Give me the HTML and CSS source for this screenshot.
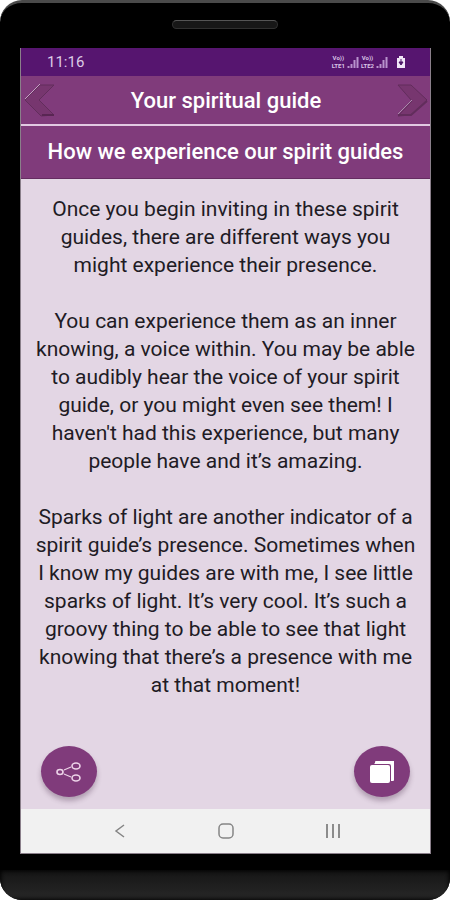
FILE: index.html
```
<!DOCTYPE html>
<html lang="en">
<head>
    <meta charset="UTF-8">
    <meta name="viewport" content="width=device-width, initial-scale=1.0">
    <title>Your spiritual guide</title>
    <link rel="stylesheet" href="styles.css">
</head>
<body>

    <div class="phone">
        <div class="phone-top">
            <div class="speaker"></div>
        </div>

        <div class="screen">
            <div class="status-bar">
                <span>11:16</span>
                <div class="status-icons">
                    <div class="network"><span>Vo))</span><span>LTE1</span></div>
                    <svg class="signal" width="12" height="12" viewBox="0 0 12 12">
                        <path d="M1.5 12V10M4.5 12V8M7.5 12V4M10.5 12V1" stroke="#b893cd" stroke-width="2"/>
                    </svg>
                    <div class="network"><span>Vo))</span><span>LTE2</span></div>
                    <svg class="signal" width="12" height="12" viewBox="0 0 12 12">
                        <path d="M1.5 12V10M4.5 12V8M7.5 12V4M10.5 12V1" stroke="#b893cd" stroke-width="2"/>
                    </svg>
                    <svg class="battery" width="10" height="12" viewBox="0 0 10 12">
                        <path d="M3 0h4v2h2v10H1V2h2z" fill="#f1e6f7"/>
                        <path d="M5 3v4M3 6h4L5 9z" fill="#4b1466" stroke="#4b1466"/>
                    </svg>
                </div>
            </div>

            <header class="title-bar">
                <button class="arrow-button" aria-label="Previous">
                    <svg width="32" height="34" viewBox="0 0 32 34">
                        <path d="M16 2H30L15 17L30 32L17 33L1 17Z" fill="#77366f" stroke="#622d5c"/>
                        <path d="M1 16L16 1" stroke="#c5a0c3"/>
                        <path d="M18 32H30" stroke="#592653" stroke-width="2"/>
                    </svg>
                </button>
                <h1>Your spiritual guide</h1>
                <button class="arrow-button" aria-label="Next">
                    <svg width="32" height="34" viewBox="0 0 32 34">
                        <path d="M2 2H15L31 17L15 32L2 33L16 18Z" fill="#77366f" stroke="#622d5c"/>
                        <path d="M2 31L16 17" stroke="#a98aaa"/>
                        <path d="M2 32H15L31 18" fill="none" stroke="#622d5c" stroke-width="2"/>
                    </svg>
                </button>
            </header>

            <h2>How we experience our spirit guides</h2>

            <main class="content">
                <p>
                    Once you begin inviting in these spirit<br>
                    guides, there are different ways you<br>
                    might experience their presence.
                </p>
                <p>
                    You can experience them as an inner<br>
                    knowing, a voice within. You may be able<br>
                    to audibly hear the voice of your spirit<br>
                    guide, or you might even see them! I<br>
                    haven't had this experience, but many<br>
                    people have and it’s amazing.
                </p>
                <p>
                    Sparks of light are another indicator of a<br>
                    spirit guide’s presence. Sometimes when<br>
                    I know my guides are with me, I see little<br>
                    sparks of light. It’s very cool. It’s such a<br>
                    groovy thing to be able to see that light<br>
                    knowing that there’s a presence with me<br>
                    at that moment!
                </p>
            </main>

            <div class="actions">
                <button class="round-button" aria-label="Share">
                    <svg width="28" height="24" viewBox="0 0 28 24" fill="none" stroke="#ecd3e8" stroke-width="1.6">
                        <ellipse cx="5" cy="12" rx="3" ry="2.5"/>
                        <ellipse cx="21" cy="6" rx="4" ry="3"/>
                        <ellipse cx="21" cy="18" rx="4" ry="3"/>
                        <path d="M9 10L16 7M9 14L16 17" stroke-width="1.2"/>
                    </svg>
                </button>
                <button class="round-button" aria-label="Copy">
                    <svg width="28" height="24" viewBox="0 0 28 24">
                        <path d="M7 3V2Q7 1 8 1H26V20Q26 21 25 21H23V6Q23 4 21 4H6Z" fill="#fff"/>
                        <rect x="2" y="5" width="20" height="18" rx="2" fill="#fff"/>
                    </svg>
                </button>
            </div>

            <nav class="nav-bar">
                <button aria-label="Back">
                    <svg width="18" height="18" viewBox="0 0 18 18" fill="none" stroke="#858585" stroke-width="1.5">
                        <path d="M13 3L5 9L13 15"/>
                    </svg>
                </button>
                <button aria-label="Home">
                    <svg width="18" height="18" viewBox="0 0 18 18" fill="none" stroke="#858585" stroke-width="1.5">
                        <rect x="2" y="2" width="14" height="14" rx="4"/>
                    </svg>
                </button>
                <button aria-label="Recent apps">
                    <svg width="18" height="18" viewBox="0 0 18 18" stroke="#8c8c8c" stroke-width="2">
                        <path d="M4 2V16M10 2V16M16 2V16"/>
                    </svg>
                </button>
            </nav>
        </div>

        <div class="phone-bottom"></div>
    </div>

</body>
</html>
```
FILE: styles.css
```
* {
    box-sizing: border-box;
}

body {
    margin: 0;
    background-color: #fff;
    font-family: Roboto, sans-serif;
}

button {
    display: flex;
    align-items: center;
    justify-content: center;
    padding: 0;
    border: none;
    background: none;
    cursor: pointer;
}

.phone {
    display: flex;
    flex-direction: column;
    min-height: 100vh;
    background-color: #000;
    border-top: 3px solid #4a4a4a;
    border-radius: 22px;
    overflow: hidden;
}

.phone-top {
    display: flex;
    justify-content: center;
    height: 45px;
    padding-top: 17px;
}

.speaker {
    width: 106px;
    height: 9px;
    background-color: #171717;
    border: 1px solid #303030;
    border-top-color: #555;
    border-radius: 5px;
}

.screen {
    flex: 1;
    display: flex;
    flex-direction: column;
    margin: 0 19px 0 20px;
    border: 1px solid #8a7f8a;
    border-top: none;
    background-color: #e3d6e4;
}

.status-bar {
    display: flex;
    align-items: center;
    justify-content: space-between;
    height: 28px;
    padding: 0 24px 0 26px;
    background-color: #56156f;
    color: #dccbe6;
    font-size: 15px;
}

.status-icons {
    display: flex;
    align-items: center;
    gap: 2px;
}

.network {
    display: flex;
    flex-direction: column;
    align-items: center;
    color: #d9c4e6;
    font-size: 6px;
    font-weight: bold;
    line-height: 8px;
}

.battery {
    margin-left: 6px;
}

.title-bar {
    display: flex;
    align-items: center;
    justify-content: space-between;
    height: 50px;
    padding: 0 2px 0 3px;
    background-color: #803b7b;
    border-bottom: 2px solid #e2c9e2;
}

h1, h2 {
    margin: 0;
    color: #fff;
    font-size: 22px;
    font-weight: 500;
    text-align: center;
}

h2 {
    padding: 0 10px;
    background-color: #803b7b;
    border-bottom: 1px solid #652c61;
    line-height: 52px;
}

.content {
    flex: 1;
    padding: 16px 8px 0;
    color: #211b24;
    font-size: 21px;
    line-height: 28px;
    text-align: center;
}

.content p {
    margin: 0 0 28px;
}

.actions {
    display: flex;
    justify-content: space-between;
    padding: 0 20px 12px;
}

.round-button {
    width: 56px;
    height: 51px;
    background-color: #803b7b;
    border-radius: 50%;
    box-shadow: 0 4px 5px rgba(60, 30, 60, 0.3);
}

.nav-bar {
    display: flex;
    align-items: center;
    justify-content: center;
    gap: 88px;
    height: 44px;
    background-color: #f1f1f1;
}

.phone-bottom {
    height: 46px;
    border-top: 16px solid #000;
    background: linear-gradient(#151515, #282828);
    box-shadow: inset 0 0 4px 1px #000;
}
```
